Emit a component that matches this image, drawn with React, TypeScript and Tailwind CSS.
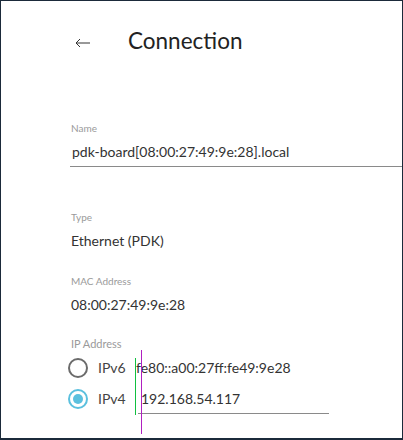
import React from "react";

function Field({ label, value }: { label: string; value: string }) {
  return (
    <div className="flex flex-col">
      <span className="text-[10px] leading-[12px] text-[#9a9a9a]">{label}</span>
      <span className="mt-[9px] text-[14px] leading-[18px] text-[#333]">{value}</span>
    </div>
  );
}

function Radio({ checked }: { checked?: boolean }) {
  return checked ? (
    <span className="flex h-[20px] w-[20px] shrink-0 items-center justify-center rounded-full border-2 border-[#5bc0de]">
      <span className="h-[10px] w-[10px] rounded-full bg-[#5bc0de]" />
    </span>
  ) : (
    <span className="h-[20px] w-[20px] shrink-0 rounded-full border-2 border-[#6b6b6b]" />
  );
}

export default function App() {
  return (
    <div
      className="relative h-[440px] w-[403px] overflow-hidden border border-b-2 border-[#1b2a3a] bg-white"
      style={{ fontFamily: "Lato, 'Open Sans', sans-serif" }}
    >
      {/* header */}
      <div className="flex h-[80px] items-center pl-[74px]">
        <svg width="15" height="10" viewBox="0 0 15 10" className="mt-[3px]">
          <path d="M1 5H15M5 1L1 5L5 9" fill="none" stroke="#333" strokeWidth="1" />
        </svg>
        <h1 className="ml-[38px] text-[22.5px] font-normal leading-none text-[#222]">Connection</h1>
      </div>

      <div className="pl-[69px] pt-[41px]">
        <div className="flex flex-col">
          <span className="pl-px text-[10px] leading-[12px] text-[#9a9a9a]">Name</span>
          <span className="mt-[9px] pl-[2px] text-[14px] leading-[18px] text-[#333]">
            pdk-board[08:00:27:49:9e:28].local
          </span>
          <div className="mt-[5px] h-px w-full bg-[#8a8a8a]" />
        </div>

        <div className="mt-[44px] flex flex-col gap-[25px] pl-px">
          <Field label="Type" value="Ethernet (PDK)" />
          <Field label="MAC Address" value="08:00:27:49:9e:28" />
        </div>

        <div className="mt-[23px]">
          <div className="pl-px text-[11px] leading-[13px] text-[#9a9a9a]">IP Address</div>
          <div className="relative -ml-[2px] mt-[2px]">
            <div className="flex h-[31px] items-center">
              <Radio />
              <span className="ml-[10px] w-[38px] text-[14px] text-[#444]">IPv6</span>
              <span className="text-[14px] text-[#333]">fe80::a00:27ff:fe49:9e28</span>
            </div>
            <div className="flex h-[31px] items-center">
              <Radio checked />
              <span className="ml-[10px] w-[40px] text-[14px] text-[#444]">IPv4</span>
              <div className="flex h-full w-[191px] items-center border-b border-[#8a8a8a] pl-[3px]">
                <span className="text-[14px] text-[#333]">192.168.54.117</span>
              </div>
            </div>
            {/* guide lines overlay */}
            <div className="absolute left-[67px] top-[6px] h-[57px] w-0 border-l border-[#10c040]" />
            <div className="absolute left-[73px] -top-[2px] h-[84px] w-0 border-l border-[#b020c0]" />
          </div>
        </div>
      </div>
    </div>
  );
}
